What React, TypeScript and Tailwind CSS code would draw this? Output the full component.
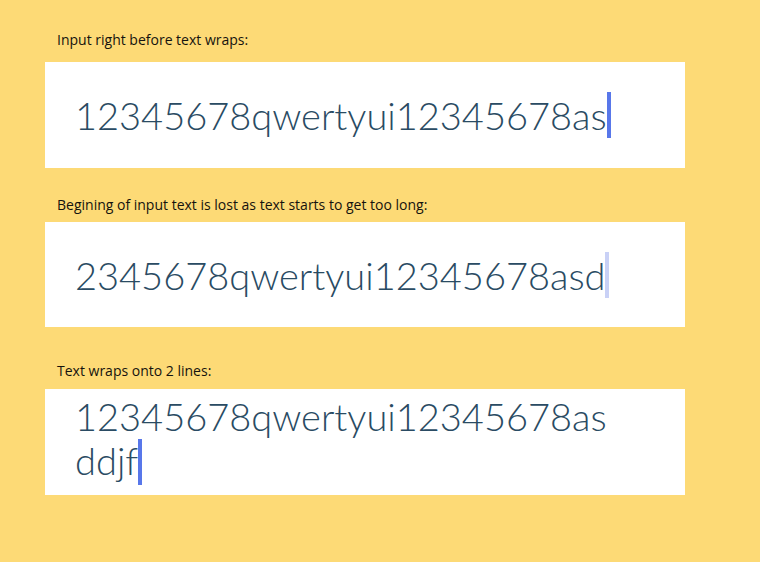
import React from 'react';

const Caret = ({ faded = false }: { faded?: boolean }) => (
  <span
    className={
      'inline-block w-[4px] h-[46px] align-[-10px] ' +
      (faded ? 'bg-[#c9d1f6]' : 'bg-[#5877ea]')
    }
  />
);

const Label = ({ children, className = '' }: { children: React.ReactNode; className?: string }) => (
  <p
    className={'pl-3 text-[14px] font-medium leading-4 text-[#15130e] ' + className}
    style={{ fontFamily: '"Open Sans", "Liberation Sans", sans-serif' }}
  >
    {children}
  </p>
);

export default function App() {
  const field = 'bg-white w-[640px] pl-[30px] text-[38px] font-light text-[#2a4b63]';
  const lato = { fontFamily: 'Lato, "Noto Sans", sans-serif' };

  return (
    <div className="min-h-[562px] w-[760px] bg-[#fdda76] pl-[45px] pt-[32px]">
      <Label>Input right before text wraps:</Label>
      <div className={field + ' mt-[14px] h-[106px] flex items-center leading-[48px]'} style={lato}>
        <span>12345678qwertyui12345678as</span>
        <Caret />
      </div>

      <Label className="mt-[29px]">Begining of input text is lost as text starts to get too long:</Label>
      <div className={field + ' mt-[9px] h-[105px] flex items-center leading-[48px]'} style={lato}>
        <span>2345678qwertyui12345678asd</span>
        <Caret faded />
      </div>

      <Label className="mt-[36px]">Text wraps onto 2 lines:</Label>
      <div className={field + ' mt-[10px] h-[106px] pt-[5px] leading-[44px]'} style={lato}>
        <div>12345678qwertyui12345678as</div>
        <div>
          ddjf
          <Caret />
        </div>
      </div>
    </div>
  );
}
